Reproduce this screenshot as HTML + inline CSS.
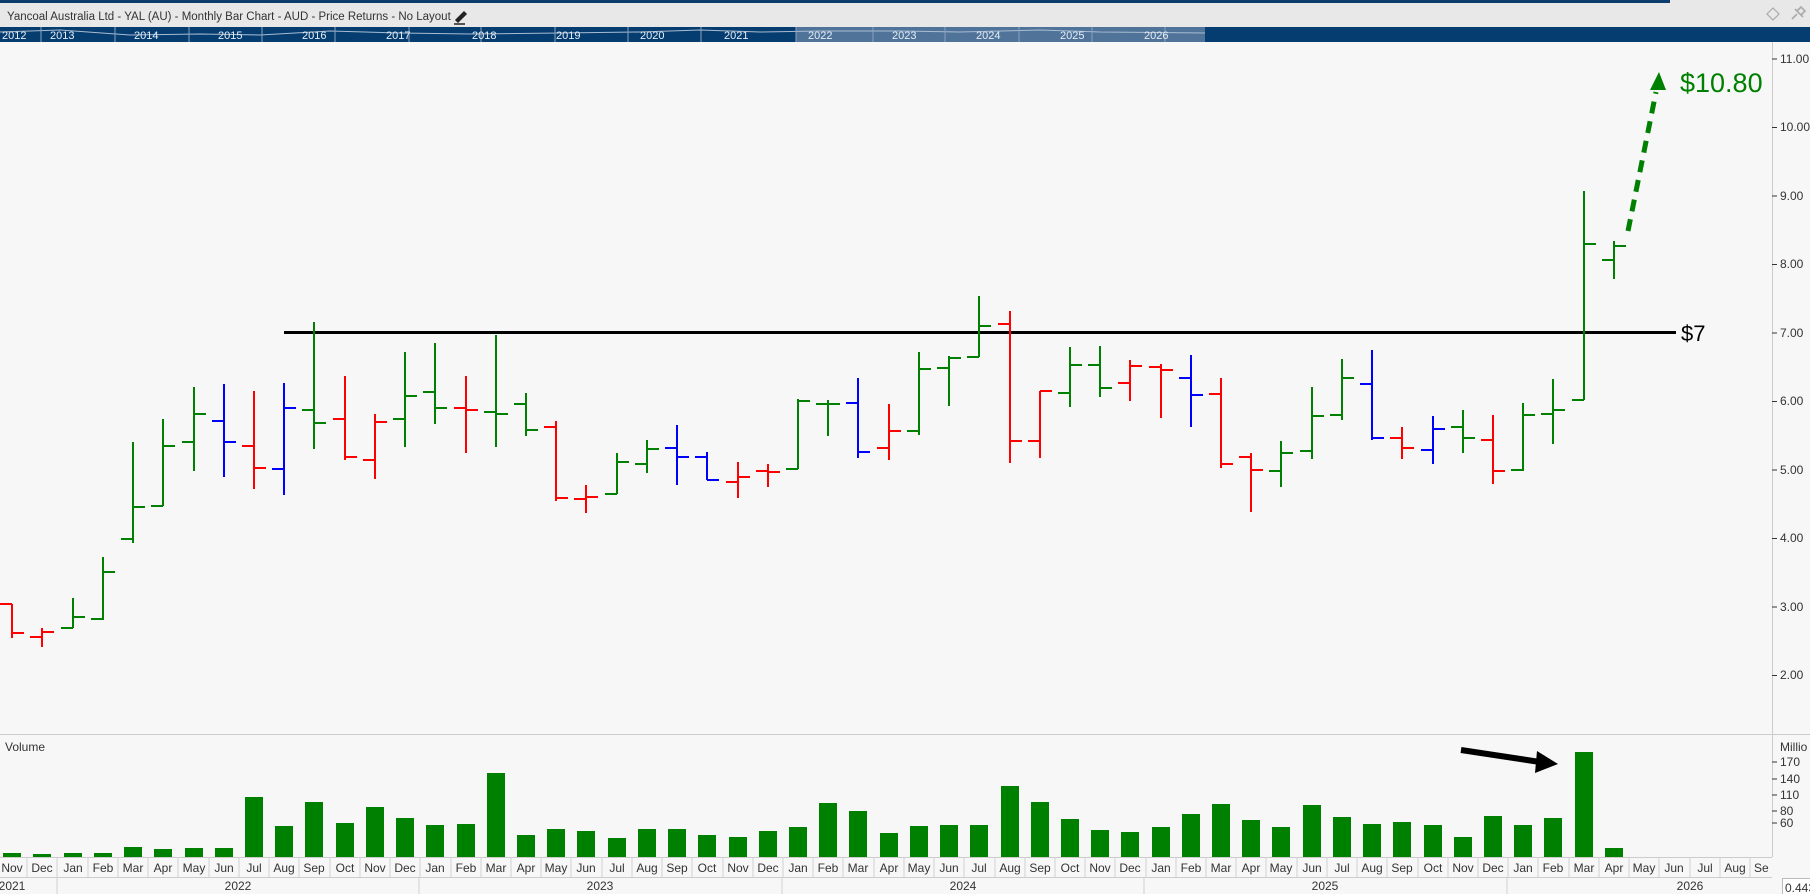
<!DOCTYPE html>
<html><head><meta charset="utf-8"><style>
html,body{margin:0;padding:0;background:#f7f7f7;width:1810px;height:894px;overflow:hidden}
svg{display:block;font-family:"Liberation Sans",sans-serif}
</style></head><body>
<svg width="1810" height="894" viewBox="0 0 1810 894" xmlns="http://www.w3.org/2000/svg">
<rect width="1810" height="894" fill="#f7f7f7"/>
<rect x="0" y="0" width="1810" height="3" fill="#0b3c6c"/>
<rect x="1670" y="0" width="140" height="3" fill="#e8e8e8"/>
<rect x="0" y="3" width="1810" height="24" fill="#e8e8e8"/>
<text x="7" y="20" font-size="11.5" fill="#333">Yancoal Australia Ltd - YAL (AU) - Monthly Bar Chart - AUD - Price Returns - No Layout</text>
<path d="M456 20 L464 12 L466 14 L458 22 Z M454 24 H465" stroke="#222" stroke-width="1.5" fill="#222"/>
<path d="M1773 8 L1779 14 L1773 20 L1767 14 Z" fill="none" stroke="#aaa" stroke-width="1.2"/>
<path d="M1792 19 L1797 14 M1795 9 L1803 17 M1797 11 L1801 7 L1805 11 L1801 15" stroke="#aaa" stroke-width="1.6" fill="none"/>
<rect x="0" y="27" width="1810" height="15" fill="#063d70"/>
<rect x="796" y="27" width="409" height="15" fill="#50739a"/>
<polyline points="0,32 60,30 130,35 200,34 260,35 330,31 400,33 470,34 560,33 640,32 700,30 760,32 820,31 900,31 960,32 1040,30 1100,32 1205,33" fill="none" stroke="#a8bcd2" stroke-width="1"/>
<g stroke="#8aa2bd" stroke-width="1">
<path d="M41 27V42M115 27V42M189 27V42M262 27V42M335 27V42M409 27V42M481 27V42M555 27V42M628 27V42M701 27V42M796 27V42M873 27V42M945 27V42M1019 27V42M1092 27V42M1165 27V42"/>
</g>
<g font-size="11" fill="#e6eef6">
<text x="2" y="39">2012</text><text x="50" y="39">2013</text><text x="134" y="39">2014</text><text x="218" y="39">2015</text><text x="302" y="39">2016</text><text x="386" y="39">2017</text><text x="472" y="39">2018</text><text x="556" y="39">2019</text><text x="640" y="39">2020</text><text x="724" y="39">2021</text><text x="808" y="39">2022</text><text x="892" y="39">2023</text><text x="976" y="39">2024</text><text x="1060" y="39">2025</text><text x="1144" y="39">2026</text>
</g>
<line x1="1772.5" y1="42" x2="1772.5" y2="857" stroke="#ccc"/>
<line x1="0" y1="734.5" x2="1810" y2="734.5" stroke="#ccc"/>
<g stroke="#333" stroke-width="1">
<path d="M1772 59H1777M1772 127.5H1777M1772 196H1777M1772 264.5H1777M1772 333H1777M1772 401.5H1777M1772 470H1777M1772 538.5H1777M1772 607H1777M1772 675.5H1777"/>
<path d="M1772 762H1777M1772 779H1777M1772 795H1777M1772 811H1777M1772 823H1777"/>
</g>
<g font-size="12" fill="#333">
<text x="1780" y="63">11.00</text><text x="1780" y="131">10.00</text><text x="1780" y="200">9.00</text><text x="1780" y="268">8.00</text><text x="1780" y="337">7.00</text><text x="1780" y="405">6.00</text><text x="1780" y="474">5.00</text><text x="1780" y="542">4.00</text><text x="1780" y="611">3.00</text><text x="1780" y="679">2.00</text>
<text x="1780" y="751">Millio</text>
<text x="1780" y="766">170</text><text x="1780" y="783">140</text><text x="1780" y="799">110</text><text x="1780" y="815">80</text><text x="1780" y="827">60</text>
<text x="5" y="751">Volume</text>
</g>
<line x1="284" y1="332.5" x2="1676" y2="332.5" stroke="#000" stroke-width="3"/>
<text x="1681" y="341" font-size="22" fill="#000">$7</text>
<g fill="none" stroke-width="2">
<path stroke="#f00" d="M12 604V638M0 604H12M12 633H24"/>
<path stroke="#f00" d="M42 628V647M30 637H42M42 632H54"/>
<path stroke="#008000" d="M73 598V628M61 628H73M73 617H85"/>
<path stroke="#008000" d="M103 557V620M91 619H103M103 572H115"/>
<path stroke="#008000" d="M133 442V543M121 539H133M133 507H145"/>
<path stroke="#008000" d="M163 419V506M151 506H163M163 446H175"/>
<path stroke="#008000" d="M194 387V471M182 442H194M194 414H206"/>
<path stroke="#00f" d="M224 384V477M212 421H224M224 442H236"/>
<path stroke="#f00" d="M254 391V489M242 446H254M254 468H266"/>
<path stroke="#00f" d="M284 383V495M272 469H284M284 408H296"/>
<path stroke="#008000" d="M314 322V449M302 410H314M314 423H326"/>
<path stroke="#f00" d="M345 376V460M333 419H345M345 457H357"/>
<path stroke="#f00" d="M375 414V479M363 460H375M375 422H387"/>
<path stroke="#008000" d="M405 352V447M393 419H405M405 396H417"/>
<path stroke="#008000" d="M435 343V424M423 392H435M435 408H447"/>
<path stroke="#f00" d="M466 376V453M454 408H466M466 410H478"/>
<path stroke="#008000" d="M496 335V447M484 412H496M496 414H508"/>
<path stroke="#008000" d="M526 393V436M514 404H526M526 430H538"/>
<path stroke="#f00" d="M556 421V501M544 427H556M556 498H568"/>
<path stroke="#f00" d="M586 485V513M574 499H586M586 497H598"/>
<path stroke="#008000" d="M617 453V494M605 494H617M617 462H629"/>
<path stroke="#008000" d="M647 440V473M635 464H647M647 449H659"/>
<path stroke="#00f" d="M677 425V485M665 448H677M677 457H689"/>
<path stroke="#00f" d="M707 452V480M695 457H707M707 480H719"/>
<path stroke="#f00" d="M738 462V498M726 482H738M738 477H750"/>
<path stroke="#f00" d="M768 464V487M756 471H768M768 472H780"/>
<path stroke="#008000" d="M798 399V469M786 469H798M798 401H810"/>
<path stroke="#008000" d="M828 400V436M816 404H828M828 404H840"/>
<path stroke="#00f" d="M858 378V458M846 403H858M858 452H870"/>
<path stroke="#f00" d="M889 404V460M877 448H889M889 431H901"/>
<path stroke="#008000" d="M919 352V435M907 431H919M919 369H931"/>
<path stroke="#008000" d="M949 356V406M937 368H949M949 358H961"/>
<path stroke="#008000" d="M979 296V357M967 357H979M979 326H991"/>
<path stroke="#f00" d="M1010 311V463M998 324H1010M1010 441H1022"/>
<path stroke="#f00" d="M1040 391V458M1028 441H1040M1040 391H1052"/>
<path stroke="#008000" d="M1070 347V407M1058 393H1070M1070 365H1082"/>
<path stroke="#008000" d="M1100 346V397M1088 365H1100M1100 388H1112"/>
<path stroke="#f00" d="M1130 360V401M1118 383H1130M1130 366H1142"/>
<path stroke="#f00" d="M1161 364V418M1149 367H1161M1161 370H1173"/>
<path stroke="#00f" d="M1191 355V427M1179 378H1191M1191 395H1203"/>
<path stroke="#f00" d="M1221 378V468M1209 394H1221M1221 464H1233"/>
<path stroke="#f00" d="M1251 453V512M1239 457H1251M1251 470H1263"/>
<path stroke="#008000" d="M1281 441V487M1269 471H1281M1281 453H1293"/>
<path stroke="#008000" d="M1312 387V459M1300 451H1312M1312 416H1324"/>
<path stroke="#008000" d="M1342 359V420M1330 415H1342M1342 378H1354"/>
<path stroke="#00f" d="M1372 350V440M1360 384H1372M1372 438H1384"/>
<path stroke="#f00" d="M1402 427V459M1390 438H1402M1402 448H1414"/>
<path stroke="#00f" d="M1433 416V464M1421 450H1433M1433 429H1445"/>
<path stroke="#008000" d="M1463 410V453M1451 427H1463M1463 438H1475"/>
<path stroke="#f00" d="M1493 415V484M1481 440H1493M1493 471H1505"/>
<path stroke="#008000" d="M1523 403V471M1511 470H1523M1523 415H1535"/>
<path stroke="#008000" d="M1553 379V444M1541 414H1553M1553 410H1565"/>
<path stroke="#008000" d="M1584 191V400M1572 400H1584M1584 244H1596"/>
<path stroke="#008000" d="M1614 241V279M1602 260H1614M1614 246H1626"/>
</g>
<line x1="1628" y1="231" x2="1656" y2="92" stroke="#008000" stroke-width="5" stroke-dasharray="12,8"/>
<path d="M1650 90 L1666 90 L1659 72 Z" fill="#008000"/>
<text x="1680" y="92" font-size="27" fill="#008000">$10.80</text>
<g fill="#008000">
<rect x="3" y="853" width="18" height="4"/><rect x="33" y="854" width="18" height="3"/><rect x="64" y="853" width="18" height="4"/><rect x="94" y="853" width="18" height="4"/><rect x="124" y="847" width="18" height="10"/><rect x="154" y="849" width="18" height="8"/><rect x="185" y="848" width="18" height="9"/><rect x="215" y="848" width="18" height="9"/><rect x="245" y="797" width="18" height="60"/><rect x="275" y="826" width="18" height="31"/><rect x="305" y="802" width="18" height="55"/><rect x="336" y="823" width="18" height="34"/><rect x="366" y="807" width="18" height="50"/><rect x="396" y="818" width="18" height="39"/><rect x="426" y="825" width="18" height="32"/><rect x="457" y="824" width="18" height="33"/><rect x="487" y="773" width="18" height="84"/><rect x="517" y="835" width="18" height="22"/><rect x="547" y="829" width="18" height="28"/><rect x="577" y="831" width="18" height="26"/><rect x="608" y="838" width="18" height="19"/><rect x="638" y="829" width="18" height="28"/><rect x="668" y="829" width="18" height="28"/><rect x="698" y="835" width="18" height="22"/><rect x="729" y="837" width="18" height="20"/><rect x="759" y="831" width="18" height="26"/><rect x="789" y="827" width="18" height="30"/><rect x="819" y="803" width="18" height="54"/><rect x="849" y="811" width="18" height="46"/><rect x="880" y="833" width="18" height="24"/><rect x="910" y="826" width="18" height="31"/><rect x="940" y="825" width="18" height="32"/><rect x="970" y="825" width="18" height="32"/><rect x="1001" y="786" width="18" height="71"/><rect x="1031" y="802" width="18" height="55"/><rect x="1061" y="819" width="18" height="38"/><rect x="1091" y="830" width="18" height="27"/><rect x="1121" y="832" width="18" height="25"/><rect x="1152" y="827" width="18" height="30"/><rect x="1182" y="814" width="18" height="43"/><rect x="1212" y="804" width="18" height="53"/><rect x="1242" y="820" width="18" height="37"/><rect x="1272" y="827" width="18" height="30"/><rect x="1303" y="805" width="18" height="52"/><rect x="1333" y="817" width="18" height="40"/><rect x="1363" y="824" width="18" height="33"/><rect x="1393" y="822" width="18" height="35"/><rect x="1424" y="825" width="18" height="32"/><rect x="1454" y="837" width="18" height="20"/><rect x="1484" y="816" width="18" height="41"/><rect x="1514" y="825" width="18" height="32"/><rect x="1544" y="818" width="18" height="39"/><rect x="1575" y="752" width="18" height="105"/><rect x="1605" y="848" width="18" height="9"/>
</g>
<line x1="1461" y1="750" x2="1540" y2="762" stroke="#000" stroke-width="6"/>
<path d="M1537 751 L1558 764 L1535 773 Z" fill="#000"/>
<rect x="0" y="857" width="1772" height="37" fill="#f7f7f7"/>
<line x1="0" y1="857.5" x2="1772" y2="857.5" stroke="#ccc"/>
<line x1="0" y1="877.5" x2="1772" y2="877.5" stroke="#ccc"/>
<g stroke="#d0d0d0">
<path d="M27 857V877M57 857V877M88 857V877M118 857V877M148 857V877M178 857V877M209 857V877M239 857V877M269 857V877M299 857V877M330 857V877M360 857V877M390 857V877M420 857V877M451 857V877M481 857V877M511 857V877M541 857V877M571 857V877M602 857V877M632 857V877M662 857V877M692 857V877M723 857V877M753 857V877M783 857V877M813 857V877M843 857V877M874 857V877M904 857V877M934 857V877M964 857V877M995 857V877M1025 857V877M1055 857V877M1085 857V877M1115 857V877M1146 857V877M1176 857V877M1206 857V877M1236 857V877M1266 857V877M1297 857V877M1327 857V877M1357 857V877M1387 857V877M1418 857V877M1448 857V877M1478 857V877M1508 857V877M1538 857V877M1569 857V877M1599 857V877M1629 857V877M1659 857V877M1690 857V877M1720 857V877M1750 857V877"/>
<path d="M57 877V894M419 877V894M782 877V894M1144 877V894M1507 877V894"/>
</g>
<g font-size="12" fill="#333" text-anchor="middle">
<text x="12" y="872">Nov</text><text x="42" y="872">Dec</text><text x="73" y="872">Jan</text><text x="103" y="872">Feb</text><text x="133" y="872">Mar</text><text x="163" y="872">Apr</text><text x="194" y="872">May</text><text x="224" y="872">Jun</text><text x="254" y="872">Jul</text><text x="284" y="872">Aug</text><text x="314" y="872">Sep</text><text x="345" y="872">Oct</text><text x="375" y="872">Nov</text><text x="405" y="872">Dec</text>
<text x="435" y="872">Jan</text><text x="466" y="872">Feb</text><text x="496" y="872">Mar</text><text x="526" y="872">Apr</text><text x="556" y="872">May</text><text x="586" y="872">Jun</text><text x="617" y="872">Jul</text><text x="647" y="872">Aug</text><text x="677" y="872">Sep</text><text x="707" y="872">Oct</text><text x="738" y="872">Nov</text><text x="768" y="872">Dec</text>
<text x="798" y="872">Jan</text><text x="828" y="872">Feb</text><text x="858" y="872">Mar</text><text x="889" y="872">Apr</text><text x="919" y="872">May</text><text x="949" y="872">Jun</text><text x="979" y="872">Jul</text><text x="1010" y="872">Aug</text><text x="1040" y="872">Sep</text><text x="1070" y="872">Oct</text><text x="1100" y="872">Nov</text><text x="1130" y="872">Dec</text>
<text x="1161" y="872">Jan</text><text x="1191" y="872">Feb</text><text x="1221" y="872">Mar</text><text x="1251" y="872">Apr</text><text x="1281" y="872">May</text><text x="1312" y="872">Jun</text><text x="1342" y="872">Jul</text><text x="1372" y="872">Aug</text><text x="1402" y="872">Sep</text><text x="1433" y="872">Oct</text><text x="1463" y="872">Nov</text><text x="1493" y="872">Dec</text>
<text x="1523" y="872">Jan</text><text x="1553" y="872">Feb</text><text x="1584" y="872">Mar</text><text x="1614" y="872">Apr</text><text x="1644" y="872">May</text><text x="1674" y="872">Jun</text><text x="1705" y="872">Jul</text><text x="1735" y="872">Aug</text>
<text x="12" y="890">2021</text><text x="238" y="890">2022</text><text x="600" y="890">2023</text><text x="963" y="890">2024</text><text x="1325" y="890">2025</text><text x="1690" y="890">2026</text>
</g>
<text x="1754" y="872" font-size="12" fill="#333">Se</text>
<rect x="1782.5" y="878.5" width="30" height="17" fill="#fff" stroke="#bbb"/>
<text x="1785" y="892" font-size="12" fill="#333">0.443</text>
</svg>
</body></html>
